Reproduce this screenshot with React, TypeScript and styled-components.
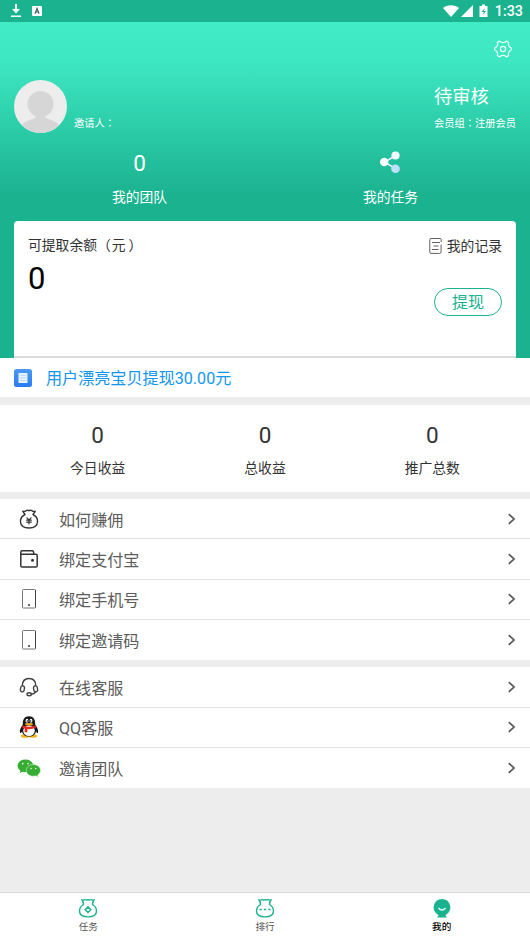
import React from "react";
import styled, { createGlobalStyle } from "styled-components";

const GREEN = "#1bb290";

const GlobalStyle = createGlobalStyle`
  * { box-sizing: border-box; }
  body {
    margin: 0;
    background: #ededed;
    font-family: Roboto, "Noto Sans CJK SC", sans-serif;
    color: #333;
  }
`;

const Screen = styled.div`
  width: 530px;
  height: 942px;
  display: flex;
  flex-direction: column;
  overflow: hidden;
  background: #ededed;
`;

const StatusBar = styled.div`
  height: 22px;
  flex: none;
  display: flex;
  align-items: center;
  padding: 0 7px 0 10px;
  background: ${GREEN};
  color: #fff;
  svg { display: block; }
`;

const StatusLeft = styled.div`
  display: flex;
  align-items: center;
  gap: 10px;
  flex: 1;
`;

const StatusRight = styled.div`
  display: flex;
  align-items: center;
`;

const Clock = styled.span`
  font-size: 14.3px;
  line-height: 22px;
  font-weight: 500;
  margin-left: 6px;
`;

const Hero = styled.header`
  height: 336px;
  flex: none;
  display: flex;
  flex-direction: column;
  background: linear-gradient(180deg, #40ebc5 0, #3de7c1 40px, #1bb290 172px);
  color: #fff;
`;

const SettingsRow = styled.div`
  height: 58px;
  display: flex;
  justify-content: flex-end;
  padding: 18px 18px 0 0;
`;

const Profile = styled.div`
  height: 64px;
  display: flex;
  padding: 0 14px;
`;

const Small = styled.div`
  font-size: 10.25px;
  line-height: 16px;
  white-space: nowrap;
`;

const Inviter = styled(Small)`
  margin: 35px 0 0 7px;
  flex: 1;
  height: 16px;
`;

const Colon = styled.span`
  font-family: "Noto Sans CJK TC", sans-serif;
`;

const Member = styled.div`
  width: 82px;
`;

const MemberStatus = styled.div`
  font-size: 18.3px;
  line-height: 24px;
  margin: 5px 0 6px;
`;

const Shortcuts = styled.div`
  height: 77px;
  display: flex;
  padding: 0 14px;
`;

const Shortcut = styled.div`
  flex: 1;
  display: flex;
  flex-direction: column;
  align-items: center;
`;

const Figure = styled.div<{ $dark?: boolean }>`
  height: 28px;
  display: flex;
  align-items: center;
  font-size: 22.5px;
  line-height: 28px;
  margin: ${(p) => (p.$dark ? "16px 0 9px" : "5px 0 10px")};
  svg { margin: 0 2px 2px 0; }
`;

const Label = styled.div`
  font-size: 13.8px;
  line-height: 20px;
  white-space: nowrap;
`;

const Unit = styled.span`
  margin: 0 3px 0 1px;
`;

const BalanceCard = styled.section`
  flex: 1;
  margin: 0 14px;
  padding: 14px 14px 0;
  background: #fff;
  border-radius: 4px 4px 0 0;
  border-bottom: 2px solid #dcdcdc;
  color: #333;
`;

const CardTop = styled.div`
  display: flex;
  justify-content: space-between;
  height: 22px;
`;

const Records = styled.div`
  display: flex;
  align-items: center;
  gap: 5px;
  height: 22px;
`;

const CardBottom = styled.div`
  display: flex;
  justify-content: space-between;
`;

const Balance = styled.div`
  font-size: 31px;
  line-height: 36px;
  margin-top: 4px;
  color: #000;
`;

const WithdrawButton = styled.button`
  width: 68px;
  height: 28px;
  margin-top: 31px;
  padding: 1px 0 0;
  border: 1px solid ${GREEN};
  border-radius: 14px;
  background: #fff;
  color: ${GREEN};
  font-family: inherit;
  font-size: 16px;
  line-height: 25px;
`;

const Notice = styled.div`
  height: 39px;
  flex: none;
  display: flex;
  align-items: center;
  gap: 14px;
  padding: 0 14px;
  background: #fff;
  color: #1296ee;
  font-size: 16.1px;
  line-height: 38px;
`;

const NoticeText = styled.span`
  padding-top: 2px;
`;

const Stats = styled.section`
  height: 87px;
  flex: none;
  margin: 8px 0 7px;
  padding: 0 14px;
  display: flex;
  background: #fff;
`;

const Menu = styled.nav`
  flex: none;
  margin-bottom: 7px;
  background: #fff;
`;

const MenuRow = styled.div`
  height: 40.35px;
  display: flex;
  align-items: center;
  padding: 0 13px 0 17px;
  border-bottom: 1px solid #e2e2e2;
  &:last-child { border-bottom: 0; }
`;

const MenuIcon = styled.div`
  width: 25px;
  display: flex;
  justify-content: center;
  margin-right: 17px;
  svg { margin-right: 1px; }
`;

const MenuText = styled.div`
  flex: 1;
  font-size: 16.1px;
  line-height: 24px;
  padding-top: 4px;
  color: #5c5c5c;
`;

const TabBar = styled.footer`
  height: 50px;
  flex: none;
  margin-top: auto;
  display: flex;
  border-top: 1px solid #dadada;
  background: #fff;
`;

const Tab = styled.div<{ $active?: boolean }>`
  flex: 1;
  display: flex;
  flex-direction: column;
  align-items: center;
  padding-top: 5px;
  font-size: 9.6px;
  line-height: 15px;
  color: ${(p) => (p.$active ? "#000" : "#555")};
  font-weight: ${(p) => (p.$active ? 500 : 400)};
`;

const DownloadIcon = () => (
  <svg width="12" height="14" viewBox="0 0 12 14" fill="#fff">
    <path d="M5 0h2v5h3L6 9.500 2 5h3zM1 11.500h10V13H1z" />
  </svg>
);

const KeyboardIcon = () => (
  <svg width="10" height="10" viewBox="0 0 10 10">
    <rect width="10" height="10" rx="1" fill="#fff" />
    <path d="M3 7.700 5 2.500 7 7.700M3.700 6h2.600" fill="none" stroke="#35695d" strokeWidth="1.200" />
  </svg>
);

const SignalIcons = () => (
  <svg width="46" height="16" viewBox="0 0 46 16" fill="#fff">
    <path d="M0 5C4 1.300 12 1.300 16 5L8 14z" />
    <path d="M30 2v12H18z" />
    <path d="M39 1.500h3V3h2.500v11h-8V3H39z" />
    <path d="m42 5-3.500 4H41l-1.500 3.500L43 8h-2.300z" fill={GREEN} />
  </svg>
);

const SettingsIcon = () => (
  <svg width="18" height="18" viewBox="0 0 18 18" fill="none" stroke="#e6fff8" strokeWidth="1.250" strokeLinejoin="round">
    <path d="M5.600 1.100Q6.800 2.600 9 2.600T12.400 1.100L14.700 2.500Q14 4.500 15 6.100T17.300 8V10Q16 10.300 15 11.900T14.700 15.500L12.400 16.900Q11.200 15.400 9 15.400T5.600 16.900L3.300 15.500Q4 13.500 3 11.900T.7 10V8Q2 7.700 3 6.100T3.300 2.500Z" />
    <circle cx="9" cy="9" r="2.600" />
  </svg>
);

const Avatar = () => (
  <svg width="53" height="53" viewBox="0 0 53 53">
    <defs>
      <clipPath id="avatar"><circle cx="26.500" cy="26.500" r="26.500" /></clipPath>
    </defs>
    <g clipPath="url(#avatar)">
      <path d="M0 0h53v53H0z" fill="#ededed" />
      <circle cx="26.500" cy="24" r="13" fill="#d6d6d6" />
      <path d="M21.500 33h10v4c0 2.500 12 3 15 10v7h-40v-7c3-7 15-7.500 15-10z" fill="#d6d6d6" />
    </g>
  </svg>
);

const ShareIcon = () => (
  <svg width="22" height="24" viewBox="0 0 22 24">
    <path d="m17 5.500-11.500 6.500L17 19" fill="none" stroke="#e4f5fb" strokeWidth="1.600" />
    <circle cx="5.200" cy="12" r="4.200" fill="#fff" />
    <circle cx="16.500" cy="5.500" r="4.100" fill="#f4fbff" />
    <circle cx="16.500" cy="18.800" r="4.300" fill="#bfe0fa" />
  </svg>
);

const RecordIcon = () => (
  <svg width="13" height="16" viewBox="0 0 13 16" fill="none" stroke="#665f5f" strokeWidth="1">
    <path d="M12.200 4V1.500q0-1-1-1H2q-1.200 0-1.200 1.300v12.400q0 1.200 1.200 1.200h8.600q1.500 0 1.500-1.600V6.500" />
    <path d="M3 4.500h8M4.500 8h5M3 11.500h6.500" />
  </svg>
);

const NoticeIcon = () => (
  <svg width="18" height="18" viewBox="0 0 18 18">
    <defs>
      <linearGradient id="notice" x2="0" y2="1"><stop stopColor="#4c9af5" /><stop offset="1" stopColor="#287bf0" /></linearGradient>
    </defs>
    <rect width="18" height="18" rx="2.500" fill="url(#notice)" />
    <path d="M4.500 4h9v10h-9z" fill="#e4f1ff" />
    <path d="M6 6.500h6M6 9h6M6 11.500h6" stroke="#b5d4fa" strokeWidth=".8" />
  </svg>
);

const BagIcon = () => (
  <svg width="20" height="20" viewBox="0 0 20 20" fill="none" stroke="#333" strokeWidth="1.400" strokeLinejoin="round" strokeLinecap="round">
    <path d="M6 5.500 3.800 2.300q2 .4 3.200-.6 1.500-1 3 0 1.500-1 3 0 1 1 3.200.6L14 5.500c3 1.500 4.700 4.500 4.500 7.500-.3 4-3.500 6-8.500 6s-8.200-2-8.500-6c-.2-3 1.500-6 4.500-7.500z" />
    <path d="m8 8.800 2 2.400 2-2.400M7.700 11.200h4.600M7.700 13.200h4.600M10 11.200v3.800" strokeWidth="1.200" />
  </svg>
);

const WalletIcon = () => (
  <svg width="18" height="18" viewBox="0 0 18 18" fill="none" stroke="#333" strokeWidth="1.500">
    <rect x=".8" y="4.200" width="16.400" height="12.800" rx="1.300" />
    <path d="M.8 5V2.200Q.8.800 2.200.8h10q1.400 0 1.400 1.400v2" />
    <circle cx="12.500" cy="10.300" r="1.500" fill="#333" stroke="none" />
  </svg>
);

const PhoneIcon = () => (
  <svg width="14" height="20" viewBox="0 0 14 20">
    <rect x=".5" y=".5" width="13" height="18.500" rx=".8" fill="none" stroke="#777" />
    <path d="M13.500 1v17.500" stroke="#444" />
    <circle cx="7" cy="16" r="1" fill="#333" />
  </svg>
);

const HeadsetIcon = () => (
  <svg width="20" height="20" viewBox="0 0 20 20" fill="none" stroke="#444" strokeWidth="1.400">
    <path d="M3.200 9C3.200 4.200 6 1.500 10 1.500S16.800 4.200 16.800 9M16.800 14.500q-1 2.300-4.600 2.800" />
    <rect x="1.500" y="8.800" width="3.800" height="6" rx="1.900" transform="rotate(8 3 12)" />
    <rect x="14.700" y="8.800" width="3.800" height="6" rx="1.900" transform="rotate(-8 17 12)" />
    <ellipse cx="10.200" cy="17.300" rx="2.200" ry="1.500" />
  </svg>
);

const QQIcon = () => (
  <svg width="20" height="22" viewBox="0 0 20 22">
    <ellipse cx="6" cy="20" rx="4.200" ry="1.800" fill="#f4b41a" />
    <ellipse cx="14" cy="20" rx="4.200" ry="1.800" fill="#f4b41a" />
    <path d="M10 .3C5.500.3 3.600 3.500 3.800 8.500 1.500 12 .3 14.500 1 17q.8.500 2-1.500C4 19 6 20.500 10 20.500s6-1.500 7-5q1.200 2 2 1.500c.7-2.500-.5-5-2.800-8.500C16.400 3.500 14.500.3 10 .3z" fill="#171717" />
    <ellipse cx="10" cy="14.800" rx="5.800" ry="5.200" fill="#fff" />
    <path d="M3.700 9.200q6.300 3 12.600 0l.7 2.200q-4 2.200-8.500 1.700l-.3 3.400-2.700-.4.300-3.400q-1.800-.6-2.800-1.400z" fill="#e42b24" />
    <ellipse cx="8" cy="4.800" rx="1.400" ry="2" fill="#fff" />
    <ellipse cx="12" cy="4.800" rx="1.400" ry="2" fill="#fff" />
    <circle cx="8.400" cy="5" r=".7" />
    <circle cx="11.600" cy="5" r=".7" />
    <ellipse cx="10" cy="8.200" rx="4" ry="1.300" fill="#f4a81a" />
  </svg>
);

const WeChatIcon = () => (
  <svg width="24" height="18" viewBox="0 0 24 18">
    <path d="M8.500.4C3.800.4.600 3.300.600 6.800c0 2.100 1.100 3.800 2.900 5l-.8 2.500 2.900-1.500c1 .3 2 .4 3.300.3C14 13 16.500 10 16.300 6.500 16 3 12.800.4 8.500.4z" fill="#38ad34" />
    <path d="M16.300 5.600c-4 0-7 2.600-7 5.800s3 5.800 7 5.800c.9 0 1.800-.1 2.500-.4l2.500 1.200-.6-2.100c1.700-1.100 2.800-2.700 2.800-4.500 0-3.200-3.200-5.800-7.200-5.800z" fill="#38ad34" stroke="#d9f3d6" strokeWidth=".6" />
    <g fill="#d9f5d5">
      <circle cx="5.800" cy="4.600" r=".9" /><circle cx="11" cy="4.600" r=".9" />
      <circle cx="14" cy="9.500" r=".8" /><circle cx="18.700" cy="9.500" r=".8" />
    </g>
  </svg>
);

const Chevron = () => (
  <svg width="10" height="12" viewBox="0 0 10 12" fill="none" stroke="#555" strokeWidth="1.700">
    <path d="m1.800 1.200 5.200 4.800-5.200 4.800" />
  </svg>
);

const TabBag = ({ dots }: { dots?: boolean }) => (
  <svg width="20" height="21" viewBox="0 0 20 21" fill="none" stroke={GREEN} strokeWidth="1.400" strokeLinejoin="round">
    <path d="M5.500 6.500Q5.600 4 3.800 1.800 5.500 2.500 7 1.500 8.500 2.300 10 1.600q1.500.7 3-.1 1.500 1 3.200.3Q14.400 4 14.500 6.500C17 8 18.500 10 18.500 13c0 4-3 5.900-8.500 5.900S1.500 17 1.500 13c0-3 1.500-5 4-6.500z" />
    {dots ? (
      <path d="M4.500 11.500h2.300M8.800 11.500h2.400M13.200 11.500h2.300" strokeWidth="1.600" />
    ) : (
      <path d="m10 8.900 2.800 2.800-2.800 2.800-2.800-2.800z" strokeWidth="1.500" />
    )}
  </svg>
);

const MineIcon = () => (
  <svg width="20" height="21" viewBox="0 0 20 21">
    <path d="M10 1a8.300 8.300 0 0 0-4.300 15.400L6.600 17.500 5 19.600h10l-1.600-2.100.9-1.100A8.300 8.300 0 0 0 10 1z" fill={GREEN} />
    <path d="M6.400 10q3.600 4 7.200 0" fill="none" stroke="#d8fff5" strokeWidth="1.300" />
  </svg>
);

const stats = ["今日收益", "总收益", "推广总数"];

const menus = [
  [
    { text: "如何赚佣", icon: <BagIcon /> },
    { text: "绑定支付宝", icon: <WalletIcon /> },
    { text: "绑定手机号", icon: <PhoneIcon /> },
    { text: "绑定邀请码", icon: <PhoneIcon /> },
  ],
  [
    { text: "在线客服", icon: <HeadsetIcon /> },
    { text: "QQ客服", icon: <QQIcon /> },
    { text: "邀请团队", icon: <WeChatIcon /> },
  ],
];

export default function App() {
  return (
    <Screen>
      <GlobalStyle />
      <StatusBar>
        <StatusLeft>
          <DownloadIcon />
          <KeyboardIcon />
        </StatusLeft>
        <StatusRight>
          <SignalIcons />
          <Clock>1:33</Clock>
        </StatusRight>
      </StatusBar>
      <Hero>
        <SettingsRow><SettingsIcon /></SettingsRow>
        <Profile>
          <Avatar />
          <Inviter>邀请人<Colon>：</Colon></Inviter>
          <Member>
            <MemberStatus>待审核</MemberStatus>
            <Small>会员组<Colon>：</Colon>注册会员</Small>
          </Member>
        </Profile>
        <Shortcuts>
          <Shortcut>
            <Figure>0</Figure>
            <Label>我的团队</Label>
          </Shortcut>
          <Shortcut>
            <Figure><ShareIcon /></Figure>
            <Label>我的任务</Label>
          </Shortcut>
        </Shortcuts>
        <BalanceCard>
          <CardTop>
            <Label>可提取余额（<Unit>元</Unit>）</Label>
            <Records>
              <RecordIcon />
              <Label>我的记录</Label>
            </Records>
          </CardTop>
          <CardBottom>
            <Balance>0</Balance>
            <WithdrawButton>提现</WithdrawButton>
          </CardBottom>
        </BalanceCard>
      </Hero>
      <Notice>
        <NoticeIcon />
        <NoticeText>用户漂亮宝贝提现30.00元</NoticeText>
      </Notice>
      <Stats>
        {stats.map((name) => (
          <Shortcut key={name}>
            <Figure $dark>0</Figure>
            <Label>{name}</Label>
          </Shortcut>
        ))}
      </Stats>
      {menus.map((rows, i) => (
        <Menu key={i}>
          {rows.map((row) => (
            <MenuRow key={row.text}>
              <MenuIcon>{row.icon}</MenuIcon>
              <MenuText>{row.text}</MenuText>
              <Chevron />
            </MenuRow>
          ))}
        </Menu>
      ))}
      <TabBar>
        <Tab><TabBag />任务</Tab>
        <Tab><TabBag dots />排行</Tab>
        <Tab $active><MineIcon />我的</Tab>
      </TabBar>
    </Screen>
  );
}
